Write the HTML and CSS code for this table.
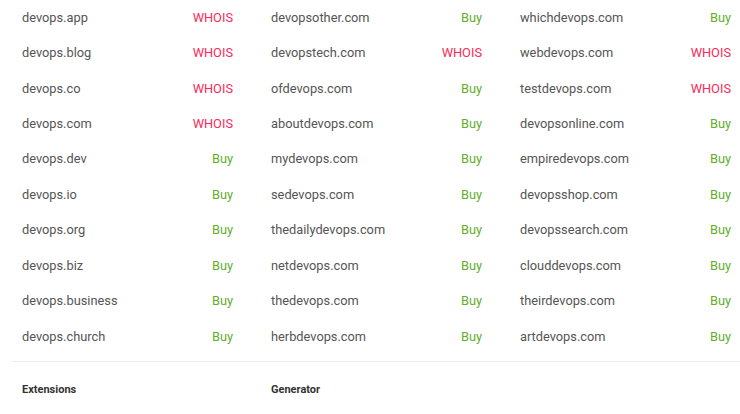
FILE: index.html
```html
<!DOCTYPE html>
<html>
<head>
  <title>devops domains</title>
  <meta charset="UTF-8">
  <meta name="viewport" content="width=device-width, initial-scale=1.0">
  <link rel="stylesheet" href="styles.css">
</head>
<body>
  <div class="domains">
    <ul class="column">
      <li><span>devops.app</span><a class="whois">WHOIS</a></li>
      <li><span>devops.blog</span><a class="whois">WHOIS</a></li>
      <li><span>devops.co</span><a class="whois">WHOIS</a></li>
      <li><span>devops.com</span><a class="whois">WHOIS</a></li>
      <li><span>devops.dev</span><a class="buy">Buy</a></li>
      <li><span>devops.io</span><a class="buy">Buy</a></li>
      <li><span>devops.org</span><a class="buy">Buy</a></li>
      <li><span>devops.biz</span><a class="buy">Buy</a></li>
      <li><span>devops.business</span><a class="buy">Buy</a></li>
      <li><span>devops.church</span><a class="buy">Buy</a></li>
    </ul>
    <ul class="column">
      <li><span>devopsother.com</span><a class="buy">Buy</a></li>
      <li><span>devopstech.com</span><a class="whois">WHOIS</a></li>
      <li><span>ofdevops.com</span><a class="buy">Buy</a></li>
      <li><span>aboutdevops.com</span><a class="buy">Buy</a></li>
      <li><span>mydevops.com</span><a class="buy">Buy</a></li>
      <li><span>sedevops.com</span><a class="buy">Buy</a></li>
      <li><span>thedailydevops.com</span><a class="buy">Buy</a></li>
      <li><span>netdevops.com</span><a class="buy">Buy</a></li>
      <li><span>thedevops.com</span><a class="buy">Buy</a></li>
      <li><span>herbdevops.com</span><a class="buy">Buy</a></li>
    </ul>
    <ul class="column">
      <li><span>whichdevops.com</span><a class="buy">Buy</a></li>
      <li><span>webdevops.com</span><a class="whois">WHOIS</a></li>
      <li><span>testdevops.com</span><a class="whois">WHOIS</a></li>
      <li><span>devopsonline.com</span><a class="buy">Buy</a></li>
      <li><span>empiredevops.com</span><a class="buy">Buy</a></li>
      <li><span>devopsshop.com</span><a class="buy">Buy</a></li>
      <li><span>devopssearch.com</span><a class="buy">Buy</a></li>
      <li><span>clouddevops.com</span><a class="buy">Buy</a></li>
      <li><span>theirdevops.com</span><a class="buy">Buy</a></li>
      <li><span>artdevops.com</span><a class="buy">Buy</a></li>
    </ul>
  </div>

  <div class="footer">
    <h4>Extensions</h4>
    <h4>Generator</h4>
    <h4></h4>
  </div>
</body>
</html>
```

FILE: styles.css
```css
/* Reset styles */
* {
  margin: 0;
  padding: 0;
  box-sizing: border-box;
}

/* Base styles */
body {
  font-family: 'Roboto', sans-serif;
  background-color: #fff;
  color: #555;
  font-size: 12.8px;
  overflow: hidden;
}

ul {
  list-style: none;
}

/* Domain grid */
.domains {
  display: grid;
  grid-template-columns: 211px 211px 211px;
  column-gap: 38px;
  padding: 0 10px 7px 22px;
}

.column li {
  display: flex;
  justify-content: space-between;
  align-items: center;
  height: 35.45px;
  line-height: 16px;
}

.whois {
  color: #fa2a5c;
}

.buy {
  color: #5fae2c;
}

/* Footer */
.footer {
  display: grid;
  grid-template-columns: 211px 211px 211px;
  column-gap: 38px;
  margin-left: 12px;
  padding: 21px 10px 0 10px;
  border-top: 1px solid #eeeeee;
}

.footer h4 {
  font-size: 11px;
  font-weight: 700;
  color: #333;
  line-height: 14px;
}
```
